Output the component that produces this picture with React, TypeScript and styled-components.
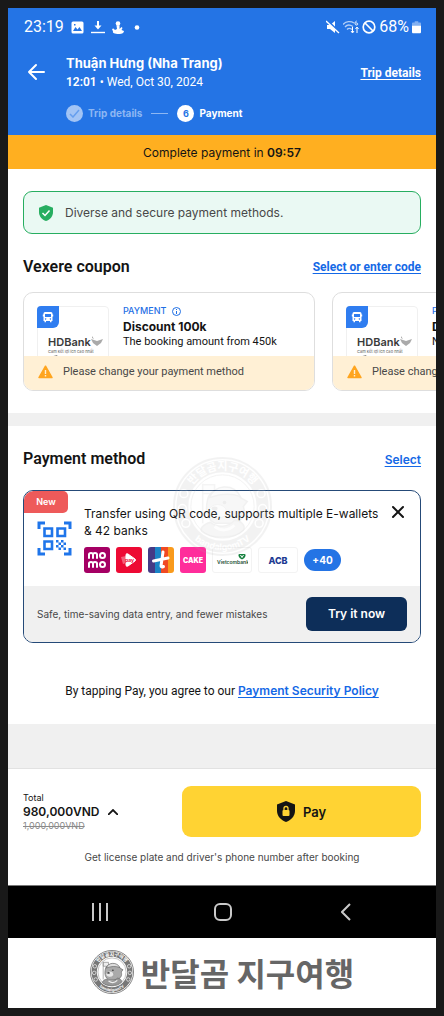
import React from "react";
import styled, { createGlobalStyle, css } from "styled-components";

const ui = `Inter, "Noto Sans", sans-serif`;
const roboto = `Roboto, "Noto Sans", sans-serif`;
const korean = `"Noto Sans CJK KR", sans-serif`;

const GlobalStyle = createGlobalStyle`
  * { box-sizing: border-box; }
  body { margin: 0; background: #191919; font-family: ${ui}; color: #141414; }
  button { font-family: inherit; border: 0; padding: 0; background: none; color: inherit; cursor: pointer; }
  h1, h2, h3, p { margin: 0; }
  svg { display: block; flex: none; }
`;

const Frame = styled.div`
  padding: 8px;
  min-height: 100vh;
`;

const Screen = styled.div`
  background: #fff;
  overflow: hidden;
`;

const Top = styled.header`
  background: #2474e5;
  color: #fff;
  height: 127px;
`;

const StatusBar = styled.div`
  display: flex;
  align-items: center;
  justify-content: space-between;
  padding: 8px 15px 0 16px;
  height: 30px;
  font: 400 16px/22px ${roboto};
`;

const StatusGroup = styled.div<{ $gap: number }>`
  display: flex;
  align-items: center;
  gap: ${(p) => p.$gap}px;
`;

const TripBar = styled.div`
  display: flex;
  align-items: center;
  padding: 16px 15px 0 18px;
`;

const BackButton = styled.button`
  width: 40px;
  height: 20px;
`;

const TripInfo = styled.div`
  flex: 1;
`;

const TripTitle = styled.h1`
  font: 700 13px/19px ${ui};
`;

const TripTime = styled.p`
  font: 400 12px/18px ${roboto};
  b { font-weight: 600; }
`;

const TextLink = styled.a<{ $light?: boolean; $face?: string }>`
  color: ${(p) => (p.$light ? "#fff" : "#1468e6")};
  font-family: ${(p) => p.$face ?? roboto};
  font-size: 12px;
  font-weight: ${(p) => (p.$face ? 600 : 700)};
  text-decoration: underline;
  text-underline-offset: 2px;
  text-decoration-skip-ink: none;
`;

const Steps = styled.ol`
  list-style: none;
  display: flex;
  align-items: center;
  gap: 9px;
  margin: 0;
  padding: 13px 0 0 58px;
`;

const Step = styled.li<{ $done?: boolean }>`
  display: flex;
  align-items: center;
  gap: 5px;
  font: 700 10px/18px ${ui};
  color: ${(p) => (p.$done ? "#8db7f3" : "#fff")};
`;

const StepDot = styled.span<{ $done?: boolean }>`
  width: 17px;
  height: 17px;
  border-radius: 50%;
  display: grid;
  place-items: center;
  font-size: 9px;
  line-height: 17px;
  color: #2474e5;
  background: ${(p) => (p.$done ? "#a2c4f5" : "#fff")};
`;

const StepLine = styled.li`
  width: 17px;
  height: 1px;
  background: #8db7f3;
`;

const Countdown = styled.div`
  background: #ffaf20;
  height: 34px;
  text-align: center;
  font: 400 12px/36px ${ui};
  b { font-weight: 600; }
`;

const Section = styled.section<{ $top: number; $bottom: number }>`
  padding: ${(p) => p.$top}px 15px ${(p) => p.$bottom}px;
`;

const Divider = styled.div<{ $height: number }>`
  height: ${(p) => p.$height}px;
  background: #f0f0f0;
`;

const Notice = styled.div`
  display: flex;
  align-items: center;
  gap: 12px;
  height: 43px;
  margin-bottom: 23px;
  padding: 0 15px;
  border: 1px solid #27ae60;
  border-radius: 9px;
  background: #eaf9f3;
  color: #484848;
  font: 400 12px/18px ${ui};
`;

const SectionHead = styled.div`
  display: flex;
  align-items: center;
  justify-content: space-between;
  height: 20px;
`;

const SectionTitle = styled.h2`
  font: 600 16px/20px ${roboto};
`;

const CouponRow = styled.div`
  display: flex;
  gap: 17px;
  margin: 15px -15px 0 0;
  overflow: hidden;
`;

const CouponCard = styled.article`
  flex: none;
  width: 292px;
  border: 1px solid #dedede;
  border-radius: 10px;
  overflow: hidden;
`;

const CouponBody = styled.div`
  display: flex;
  gap: 14px;
  height: 63px;
  padding: 13px 13px 0;
  overflow: hidden;
`;

const CouponLogo = styled.div`
  position: relative;
  flex: none;
  width: 72px;
  height: 72px;
  border: 1px solid #f0f0f0;
  border-radius: 4px;
  padding: 29px 0 0 10px;
`;

const BusBadge = styled.span`
  position: absolute;
  top: -1px;
  left: -1px;
  width: 22px;
  height: 22px;
  display: grid;
  place-items: center;
  background: #2f7df0;
  border-radius: 4px 0 6px 0;
`;

const BankName = styled.div`
  display: flex;
  font: 600 11px/13px ${ui};
  color: #3a3a3a;
`;

const BankTagline = styled.div`
  font: 500 4px/6px ${ui};
  color: #777;
  white-space: nowrap;
`;

const CouponText = styled.div`
  white-space: nowrap;
`;

const CouponTag = styled.p`
  display: flex;
  align-items: center;
  gap: 6px;
  font: 500 9px/10px ${ui};
  color: #1f6fe5;
`;

const CouponTitle = styled.h3`
  font: 700 12px/15px ${ui};
  margin-top: 3px;
`;

const CouponNote = styled.p`
  font: 400 11px/16px ${roboto};
`;

const CouponWarning = styled.p`
  display: flex;
  align-items: center;
  gap: 10px;
  height: 34px;
  padding: 0 14px 2px;
  background: #fff0d5;
  color: #484848;
  font: 400 11px/16px ${roboto};
  white-space: nowrap;
`;

const MethodWrap = styled.div`
  position: relative;
`;

const MethodCard = styled.article`
  position: relative;
  margin-top: 21px;
  border: 1px solid #254a78;
  border-radius: 10px;
  overflow: hidden;
`;

const NewTag = styled.span`
  position: absolute;
  top: 0;
  left: 0;
  width: 44px;
  height: 22px;
  border-radius: 9px 5px 5px 0;
  background: #ee5a5a;
  color: #fff;
  text-align: center;
  font: 600 9px/22px ${ui};
`;

const MethodBody = styled.div`
  display: flex;
  gap: 12px;
  height: 95px;
  padding: 14px 14px 0 13px;
`;

const QrBox = styled.div`
  padding-top: 16px;
`;

const MethodText = styled.div`
  flex: 1;
`;

const MethodTitle = styled.div`
  display: flex;
  justify-content: space-between;
  font: 400 12px/17px ${ui};
  white-space: nowrap;
`;

const CloseButton = styled.button`
  width: 16px;
  height: 16px;
`;

const Wallets = styled.div`
  display: flex;
  align-items: center;
  gap: 6px;
  margin-top: 8px;
`;

const walletText = css`
  display: grid;
  place-items: center;
  font-family: ${ui};
  font-weight: 700;
`;

const Wallet = styled.span<{ $bg?: string; $wide?: boolean; $size?: number; $weight?: number; $color?: string }>`
  ${walletText}
  width: ${(p) => (p.$wide ? 40 : 26)}px;
  height: 26px;
  border-radius: 3px;
  background: ${(p) => p.$bg ?? "#fff"};
  border: ${(p) => (p.$wide ? "1px solid #f3f3f3" : "0")};
  color: ${(p) => p.$color ?? "#fff"};
  font-size: ${(p) => p.$size ?? 9}px;
  font-weight: ${(p) => p.$weight ?? 700};
  overflow: hidden;
`;

const MoreWallets = styled.span`
  ${walletText}
  width: 37px;
  height: 22px;
  border-radius: 11px;
  background: #2474e5;
  color: #fff;
  font-size: 10px;
`;

const MethodFoot = styled.div`
  display: flex;
  align-items: center;
  justify-content: space-between;
  height: 56px;
  padding: 0 13px;
  background: #f0f0f0;
  color: #484848;
  font: 400 10px/16px ${ui};
`;

const TryButton = styled.button`
  width: 101px;
  height: 34px;
  border-radius: 6px;
  background: #0d2e59;
  color: #fff;
  font: 600 12px/34px ${ui};
`;

const Terms = styled.p`
  margin-top: 39px;
  text-align: center;
  font: 400 12px/18px ${roboto};
`;

const PayBar = styled.footer`
  border-top: 1px solid #e2e2e2;
  padding: 17px 15px 19px;
`;

const PayRow = styled.div`
  display: flex;
  align-items: center;
`;

const Total = styled.div`
  width: 159px;
  font: 400 9px/11px ${ui};
  del { color: #8a8a8a; display: block; }
`;

const TotalValue = styled.button`
  display: flex;
  align-items: center;
  gap: 9px;
  font: 600 12px/17px ${ui};
`;

const PayButton = styled.button`
  flex: 1;
  height: 51px;
  border-radius: 9px;
  background: #ffd333;
  display: flex;
  align-items: center;
  justify-content: center;
  gap: 8px;
  font: 600 13px/20px ${ui};
`;

const PayNote = styled.p`
  margin-top: 12px;
  text-align: center;
  color: #484848;
  font: 400 10px/17px ${ui};
`;

const NavBar = styled.nav`
  display: flex;
  height: 53px;
  padding: 0 28px 0 30px;
  background: #000;
  border-top: 1px solid #777;
`;

const NavButton = styled.button`
  flex: 1;
  display: grid;
  place-items: center;
`;

const Brand = styled.div`
  height: 70px;
  padding-bottom: 2px;
  display: flex;
  align-items: center;
  justify-content: center;
  gap: 7px;
  color: #666;
  font: 700 32px/44px ${korean};
`;

const Watermark = styled.div`
  position: absolute;
  top: -33px;
  left: 50%;
  margin-left: -49px;
  opacity: 0.14;
  pointer-events: none;
`;

function Seal({ size, id, faint }: { size: number; id: string; faint?: boolean }) {
  const ring = faint ? "#aaa" : "#777";
  return (
    <svg width={size} height={size} viewBox="0 0 100 100" aria-hidden="true">
      <defs>
        <path id={`${id}-top`} d="M13 50a37 37 0 0 1 74 0" />
        <path id={`${id}-bottom`} d="M6 50a44 44 0 0 0 88 0" />
      </defs>
      <circle cx="50" cy="50" r="49" fill={faint ? "none" : "#fff"} stroke={ring} strokeWidth="2" />
      <circle cx="50" cy="50" r="40.500" fill="none" stroke={ring} strokeWidth="12" />
      <circle cx="50" cy="50" r="32" fill={faint ? "none" : "#fff"} stroke={ring} strokeWidth="1" />
      <text fontFamily={korean} fontSize="11" fontWeight="700" fill="#fff">
        <textPath href={`#${id}-top`} startOffset="50%" textAnchor="middle">반달곰지구여행</textPath>
      </text>
      <text fontFamily={ui} fontSize="9" fontWeight="700" fill="#fff">
        <textPath href={`#${id}-bottom`} startOffset="50%" textAnchor="middle">bandalgomTV</textPath>
      </text>
      <g fill={ring} stroke="#fff" strokeWidth="1.5">
        <circle cx="11" cy="37" r="4" />
        <circle cx="89" cy="37" r="4" />
        <circle cx="9.500" cy="52" r="4" />
        <circle cx="90.500" cy="52" r="4" />
        <circle cx="13" cy="67" r="4" />
        <circle cx="87" cy="67" r="4" />
      </g>
      <g opacity={faint ? 0.6 : 1}>
        <path d="M30 27v40M30 28h12v9H30z" fill="#eee" stroke="#888" strokeWidth="1.5" />
        <path d="M35 43c2-13 27-16 33-2l7 4-4 5c3 9-2 15-10 17H43c-8-3-11-12-8-24z" fill="#aaa" stroke="#666" strokeWidth="1.5" />
        <path d="M37 41c4-13 24-15 31-1-10-4-20-3-31 1z" fill="#ddd" stroke="#666" strokeWidth="1.5" />
        <ellipse cx="45" cy="55" rx="9" ry="7" fill="#e6e6e6" stroke="#777" />
        <ellipse cx="42" cy="52" rx="3" ry="2" fill="#444" />
        <circle cx="52" cy="46" r="1.8" fill="#333" />
        <path d="M38 66c-8 2-11 7-9 9 9 8 33 8 42-1 3-5-3-10-9-10-6 7-17 8-24 2z" fill="#999" stroke="#666" strokeWidth="1.5" />
        <path d="M42 70c6 5 14 5 20-1" fill="none" stroke="#eee" strokeWidth="3" />
      </g>
    </svg>
  );
}

function Coupon({ title, note }: { title: string; note: string }) {
  return (
    <CouponCard>
      <CouponBody>
        <CouponLogo>
          <BusBadge>
            <svg width="12" height="12" viewBox="0 0 12 12">
              <path fill="#fff" fillRule="evenodd" d="M3 1h6q1.500 0 1.500 1.500v1h.7v2h-.7V10H9.500v1.200H8V10H4v1.200H2.500V10h-1V5.500H.8v-2h.7v-1Q1.500 1 3 1zM3 3v3h6V3zM3.600 7.200a.7.7 0 1 0 .01 0zM8.400 7.200a.7.7 0 1 0 .01 0z" />
            </svg>
          </BusBadge>
          <BankName>
            HDBank
            <svg width="13" height="13" viewBox="0 0 13 13">
              <path d="M1 0l2 3-2-1zM0 3l3 1 3 1 6-2-2 4-4 3-4-3z" fill="#aaa" />
            </svg>
          </BankName>
          <BankTagline>Cam kết lợi ích cao nhất</BankTagline>
          <svg width="20" height="6" viewBox="0 0 20 6">
            <path d="M-5 4 9 0l2 4z" fill="#888" />
          </svg>
        </CouponLogo>
        <CouponText>
          <CouponTag>
            PAYMENT
            <svg width="9" height="9" viewBox="0 0 9 9" fill="none" stroke="#1f6fe5">
              <circle cx="4.500" cy="4.500" r="4" />
              <path d="M4.500 4v3M4.500 2v1" />
            </svg>
          </CouponTag>
          <CouponTitle>{title}</CouponTitle>
          <CouponNote>{note}</CouponNote>
        </CouponText>
      </CouponBody>
      <CouponWarning>
        <svg width="15" height="14" viewBox="0 0 15 14">
          <path d="M7.500 1.200 14 12.500H1z" fill="#ffa51f" stroke="#ffa51f" strokeWidth="1.5" strokeLinejoin="round" />
          <path d="M7.500 5v4M7.500 10v1.400" stroke="#fff0d5" strokeWidth="1.4" />
        </svg>
        Please change your payment method
      </CouponWarning>
    </CouponCard>
  );
}

export default function App() {
  return (
    <Frame>
      <GlobalStyle />
      <Screen>
        <Top>
          <StatusBar>
            <StatusGroup $gap={7}>
              <span>23:19</span>
              <svg width="13" height="13" viewBox="0 0 13 13">
                <rect x=".5" y=".5" width="12" height="12" rx="1.5" fill="#fff" />
                <path d="M2 10 4.500 6l2 2.500L8.500 6l2.500 4zM3 3h1.500v1.500H3z" fill="#2474e5" />
              </svg>
              <svg width="14" height="13" viewBox="0 0 14 13">
                <path d="M7 0v5" stroke="#fff" strokeWidth="2" />
                <path d="M3.500 4.500h7L7 8.500z" fill="#fff" />
                <path d="M0 11.500h14" stroke="#fff" strokeWidth="1.4" />
              </svg>
              <svg width="12" height="13" viewBox="0 0 12 13" fill="#fff">
                <circle cx="6" cy="2.600" r="2.300" />
                <path d="M4.500 4.500h3L7.500 8l2-2 1 1-1 2 2.500 1c0 2-2 3-4.500 3S0 12.500 1 10.500L0 8l1.500-.5L3 9l2-1z" />
              </svg>
              <svg width="18" height="13" viewBox="0 0 18 13"><circle cx="6" cy="6.500" r="2.300" fill="#fff" /></svg>
            </StatusGroup>
            <StatusGroup $gap={3}>
              <svg width="14" height="14" viewBox="0 0 14 14">
                <path d="M1 5h3l5-4v12L4 9H1z" fill="#fff" />
                <path d="M1 0l13 13" stroke="#2474e5" strokeWidth="2" />
                <path d="M0 1l13 12" stroke="#fff" strokeWidth="1.3" />
              </svg>
              <svg width="16" height="14" viewBox="0 0 16 14" fill="none" stroke="#fff">
                <path d="M0 4.500C3 1 8 1 11 3M2 7c2-2.500 5-2.500 8-.5M4 9.500c1.500-1.500 3-1.500 5 0" opacity=".65" strokeWidth="1.3" />
                <path d="M13.500 1c-2 1-2 4 0 4s1.500-2.500-.8-2M9.500 7v5.500M8 11l1.500 2L11 11M14 13V7.500M12.500 9 14 7l1.500 2" />
              </svg>
              <svg width="14" height="14" viewBox="0 0 14 14" fill="none" stroke="#fff" strokeWidth="1.7">
                <circle cx="7" cy="7" r="5.800" />
                <path d="m3 3 8 8" />
              </svg>
              <span>68%</span>
              <svg width="9" height="13" viewBox="0 0 10 14">
                <path d="M3 0h4v1.500h2q1 0 1 1V6H0V2.500q0-1 1-1h2z" fill="#82b0f1" />
                <path d="M0 5h10v7q0 1.500-1 1.500H1Q0 13.500 0 12z" fill="#fff" />
              </svg>
            </StatusGroup>
          </StatusBar>
          <TripBar>
            <BackButton aria-label="Back">
              <svg width="20" height="20" viewBox="0 0 20 20" fill="none" stroke="#fff" strokeWidth="2" strokeLinecap="round" strokeLinejoin="round">
                <path d="M18 9H3m7-7-7 7 7 7" />
              </svg>
            </BackButton>
            <TripInfo>
              <TripTitle>Thuận Hưng (Nha Trang)</TripTitle>
              <TripTime><b>12:01</b> • Wed, Oct 30, 2024</TripTime>
            </TripInfo>
            <TextLink href="#trip" $light>Trip details</TextLink>
          </TripBar>
          <Steps>
            <Step $done>
              <StepDot $done>
                <svg width="11" height="9" viewBox="0 0 11 9" fill="none" stroke="#659eee" strokeWidth="1.5">
                  <path d="m1 5 3 3 6-7" />
                </svg>
              </StepDot>
              Trip details
            </Step>
            <StepLine aria-hidden="true" />
            <Step>
              <StepDot>6</StepDot>
              Payment
            </Step>
          </Steps>
        </Top>
        <Countdown>Complete payment in <b>09:57</b></Countdown>

        <Section $top={22} $bottom={22}>
          <Notice>
            <svg width="14" height="16" viewBox="0 0 14 16">
              <path d="M7 0l7 2.700V7c0 4.500-3 7.700-7 9-4-1.300-7-4.500-7-9V2.700z" fill="#27ae60" />
              <path d="m3.500 8 2.500 2.500 4.500-5" fill="none" stroke="#fff" strokeWidth="1.5" />
            </svg>
            Diverse and secure payment methods.
          </Notice>
          <SectionHead>
            <SectionTitle>Vexere coupon</SectionTitle>
            <TextLink href="#code">Select or enter code</TextLink>
          </SectionHead>
          <CouponRow>
            <Coupon title="Discount 100k" note="The booking amount from 450k" />
            <Coupon title="Discount 50k" note="No minimum amount" />
          </CouponRow>
        </Section>
        <Divider $height={13} />

        <Section $top={23} $bottom={24}>
          <SectionHead>
            <SectionTitle>Payment method</SectionTitle>
            <TextLink href="#select" $face={ui}>Select</TextLink>
          </SectionHead>
          <MethodWrap>
            <MethodCard>
              <NewTag>New</NewTag>
              <MethodBody>
                <QrBox>
                  <svg width="35" height="35" viewBox="0 0 35 35" fill="none" stroke="#1f75ea" strokeWidth="3">
                    <path d="M2 8V2h6M27 2h6v6M33 27v6h-6M8 33H2v-6" />
                    <path d="M7.500 7.500h7.500V15H7.500zM20.500 7.500H28V15h-7.500zM7.500 20.500H15V28H7.500z" strokeWidth="2.6" />
                    <path d="M19 19h2.500v2.500H19zM24 19h2.500v2.500H24zM21.500 21.500H24V24h-2.500zM26.500 21.500H29V24h-2.500zM19 24h2.500v2.500H19zM24 24h2.500v2.500H24zM21.500 26.500H24V29h-2.500zM26.500 26.500H29V29h-2.500z" fill="#1f75ea" stroke="none" />
                  </svg>
                </QrBox>
                <MethodText>
                  <MethodTitle>
                    <p>Transfer using QR code, supports multiple E-wallets<br />&amp; 42 banks</p>
                    <CloseButton aria-label="Close">
                      <svg width="16" height="16" viewBox="0 0 16 16" stroke="#141414" strokeWidth="2" strokeLinecap="round">
                        <path d="m3 2 10 10M13 2 3 12" />
                      </svg>
                    </CloseButton>
                  </MethodTitle>
                  <Wallets>
                    <Wallet $bg="#a50064">
                      <svg width="20" height="18" viewBox="0 0 20 18" fill="none" stroke="#fff" strokeWidth="2" strokeLinecap="round">
                        <path d="M2 7V3.500Q2 2 4 2t2 1.500V7M6 3.500Q6 2 8 2t2 1.500V7M2 16v-3.500Q2 11 4 11t2 1.500V16M6 12.500Q6 11 8 11t2 1.500V16" />
                        <circle cx="15.500" cy="4.500" r="2.500" />
                        <circle cx="15.500" cy="13.500" r="2.500" />
                      </svg>
                    </Wallet>
                    <Wallet $bg="#ed0a34">
                      <svg width="20" height="18" viewBox="0 0 20 18">
                        <path d="M7 4q0-2 2-1l7 5q1 1 0 2l-7 5q-2 1-2-1z" fill="#fff" stroke="#fff" />
                        <path d="M2 6l5-1v7l-3 1z" fill="#fff" opacity=".35" />
                        <text x="6" y="11" fontSize="5" fontFamily={ui} fill="#ed0a34">pay</text>
                      </svg>
                    </Wallet>
                    <Wallet>
                      <svg width="26" height="26" viewBox="0 0 26 26">
                        <path d="M0 0h7v26H0z" fill="#453a86" />
                        <path d="M7 0h6v26H7z" fill="#1b84c6" />
                        <path d="M13 0h7v26h-7z" fill="#f04a23" />
                        <path d="M20 0h6v26h-6z" fill="#f99a1c" />
                        <path d="M15 5l-2 14q0 1.500 2.500.5M5.500 14 20 11" fill="none" stroke="#fff" strokeWidth="3" strokeLinecap="round" />
                      </svg>
                    </Wallet>
                    <Wallet $bg="#ff2d9b" $size={7} $weight={900}>CAKE</Wallet>
                    <Wallet $wide>
                      <svg width="32" height="16" viewBox="0 0 32 16">
                        <path d="M23.500 2h5q1.500 0 1 2-.5 2-3.500 3.500Q23 6 22.500 4q-.5-2 1-2z" fill="#16813f" />
                        <path d="m24.500 3 1.500 2.500L27.500 3" fill="none" stroke="#fff" />
                        <text x="1" y="12" fontSize="5" fontWeight="600" fontFamily={ui} fill="#1d5137">Vietcombank</text>
                      </svg>
                    </Wallet>
                    <Wallet $wide $size={9} $weight={800} $color="#203a92">ACB</Wallet>
                    <MoreWallets>+40</MoreWallets>
                  </Wallets>
                </MethodText>
              </MethodBody>
              <MethodFoot>
                Safe, time-saving data entry, and fewer mistakes
                <TryButton>Try it now</TryButton>
              </MethodFoot>
            </MethodCard>
            <Watermark><Seal size={99} id="mark" faint /></Watermark>
          </MethodWrap>
          <Terms>
            By tapping Pay, you agree to our <TextLink href="#policy" $face={ui}>Payment Security Policy</TextLink>
          </Terms>
        </Section>
        <Divider $height={44} />

        <PayBar>
          <PayRow>
            <Total>
              Total
              <TotalValue>
                980,000VND
                <svg width="10" height="6" viewBox="0 0 10 6" fill="none" stroke="#141414" strokeWidth="1.8">
                  <path d="m0 6 5-5 5 5" />
                </svg>
              </TotalValue>
              <del>1,000,000VND</del>
            </Total>
            <PayButton>
              <svg width="18" height="21" viewBox="0 0 18 21">
                <path d="M9 0l9 3.500V10c0 5-4 9-9 11-5-2-9-6-9-11V3.500z" fill="#141414" />
                <rect x="5.500" y="9" width="7" height="6" rx="1" fill="#ffd333" />
                <path d="M7 9V7.500a2 2 0 0 1 4 0V9" fill="none" stroke="#ffd333" strokeWidth="1.3" />
              </svg>
              Pay
            </PayButton>
          </PayRow>
          <PayNote>Get license plate and driver's phone number after booking</PayNote>
        </PayBar>

        <NavBar>
          <NavButton aria-label="Recent apps">
            <svg width="18" height="18" viewBox="0 0 18 18" stroke="#c9c9c9" strokeWidth="2">
              <path d="M2 0v18M9 0v18M16 0v18" />
            </svg>
          </NavButton>
          <NavButton aria-label="Home">
            <svg width="18" height="18" viewBox="0 0 18 18" fill="none" stroke="#c9c9c9" strokeWidth="2">
              <rect x="1" y="1" width="16" height="16" rx="5" />
            </svg>
          </NavButton>
          <NavButton aria-label="Go back">
            <svg width="10" height="18" viewBox="0 0 10 18" fill="none" stroke="#c9c9c9" strokeWidth="2">
              <path d="M9 1 1 9l8 8" />
            </svg>
          </NavButton>
        </NavBar>
        <Brand>
          <Seal size={44} id="brand" />
          <span>반달곰 지구여행</span>
        </Brand>
      </Screen>
    </Frame>
  );
}
